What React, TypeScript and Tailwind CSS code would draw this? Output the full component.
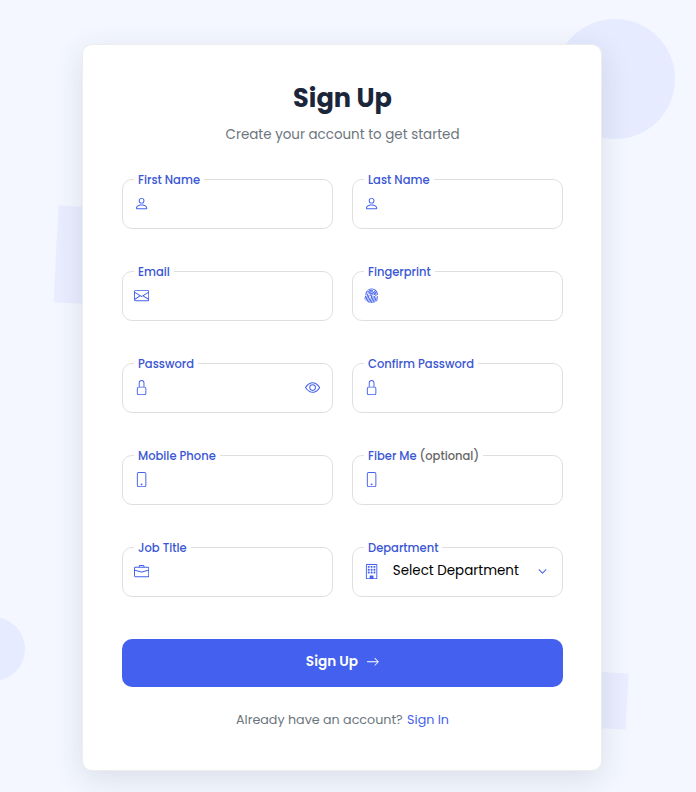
import type { ReactNode } from "react";
import {
  BsArrowRight, BsBriefcase, BsBuilding, BsChevronDown, BsEnvelope,
  BsEye, BsFingerprint, BsLock, BsPerson, BsPhone,
} from "react-icons/bs";

type FieldProps = {
  label: ReactNode;
  icon: ReactNode;
  children?: ReactNode;
};

function Field({ label, icon, children }: FieldProps) {
  return (
    <div className="relative flex h-[50px] items-center rounded-[10px] border border-[#dfdfdf] pl-[10.6px] pr-3 text-[15.2px] text-[#4361ee]">
      <label className="absolute -top-[9px] left-[11px] bg-white px-1 text-[11.52px] leading-[19px] font-medium whitespace-nowrap text-[#3a56d4]">
        {label}
      </label>
      <span className="-mt-px flex w-[15.2px] shrink-0">{icon}</span>
      {children}
    </div>
  );
}

export default function App() {
  return (
    <main className="relative flex h-[792px] w-full justify-center overflow-hidden bg-[#f4f7ff] pr-3 pt-11 font-['Poppins','Inter',sans-serif]">
      <div className="absolute left-[555px] top-[19px] size-[120px] rounded-full bg-[#e6ebff]" />
      <div className="absolute left-[56px] top-[208px] h-[97px] w-[100px] rotate-3 bg-[#eaedff]" />
      <div className="absolute -left-[39px] top-[617px] size-[64px] rounded-full bg-[#e6ebff]" />
      <div className="absolute left-[570px] top-[672px] h-[56px] w-[57px] rotate-3 bg-[#eaedff]" />
      <section className="relative h-[727px] w-[520px] rounded-[10px] border border-[#ededf0] bg-white pl-[39px] pr-[38px] pt-[33px] shadow-[0_8px_30px_rgba(30,50,70,0.12)]">
        <h1 className="text-center text-[25.6px] leading-[41px] font-bold text-[#1b263b]">Sign Up</h1>
        <p className="mt-[5px] text-center text-[13.44px] leading-[21px] text-[#6c757d]">Create your account to get started</p>
        <form className="mt-[34px] grid grid-cols-2 gap-x-[19px] gap-y-[42px]">
          <Field label="First Name" icon={<BsPerson />} />
          <Field label="Last Name" icon={<BsPerson />} />
          <Field label="Email" icon={<BsEnvelope />} />
          <Field label="Fingerprint" icon={<BsFingerprint />} />
          <Field label="Password" icon={<BsLock />}>
            <BsEye className="-mt-px ml-auto" />
          </Field>
          <Field label="Confirm Password" icon={<BsLock />} />
          <Field label="Mobile Phone" icon={<BsPhone />} />
          <Field label={<>Fiber Me <span className="text-[#666]">(optional)</span></>} icon={<BsPhone />} />
          <Field label="Job Title" icon={<BsBriefcase />} />
          <Field label="Department" icon={<BsBuilding />}>
            <span className="-mt-[2px] ml-[14px] text-[13.44px] leading-5 whitespace-nowrap text-black">Select Department</span>
            <BsChevronDown className="-mt-px mr-[3px] ml-auto size-[9px] stroke-[#4361ee] stroke-1" />
          </Field>
        </form>
        <button className="mt-[42px] flex h-12 w-full items-center justify-center gap-[7.5px] rounded-[10px] bg-[#4361ee] pb-[2px] text-[13.6px] font-semibold text-white">
          Sign Up <BsArrowRight className="-mt-px size-[13.6px]" />
        </button>
        <p className="mt-[23px] text-center text-[12.7px] leading-5 text-[#6c757d]">
          Already have an account? <a className="ml-px text-[#4361ee]">Sign In</a>
        </p>
      </section>
    </main>
  );
}
